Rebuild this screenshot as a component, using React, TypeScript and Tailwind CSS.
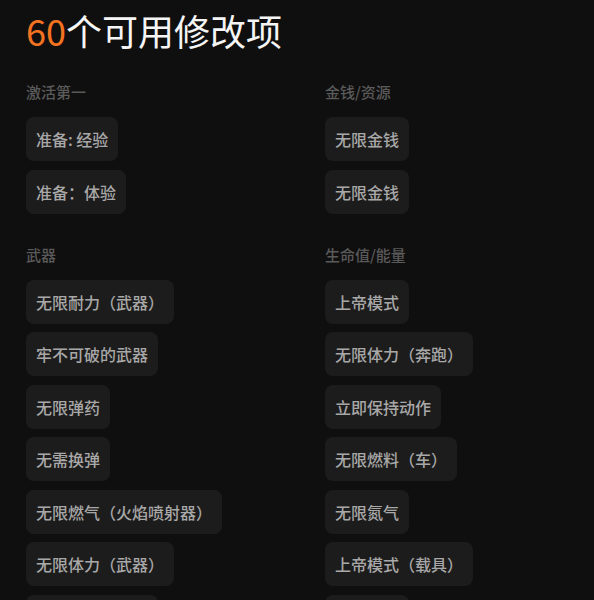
import React from "react";

const sections: { title: string; items: string[] }[][] = [
  [
    { title: "激活第一", items: ["准备: 经验", "准备：体验"] },
    {
      title: "武器",
      items: [
        "无限耐力（武器）",
        "牢不可破的武器",
        "无限弹药",
        "无需换弹",
        "无限燃气（火焰喷射器）",
        "无限体力（武器）",
        "无限手雷与炸药",
      ],
    },
  ],
  [
    { title: "金钱/资源", items: ["无限金钱", "无限金钱"] },
    {
      title: "生命值/能量",
      items: [
        "上帝模式",
        "无限体力（奔跑）",
        "立即保持动作",
        "无限燃料（车）",
        "无限氮气",
        "上帝模式（载具）",
        "无限护甲",
      ],
    },
  ],
];

function Section({ title, items }: { title: string; items: string[] }) {
  return (
    <div className="flex flex-col">
      <div className="h-6 leading-[22px] text-[15px] font-medium text-[#5a5a5a]">{title}</div>
      <div className="mt-3 flex flex-col items-start gap-[8.5px]">
        {items.map((it, i) => (
          <div
            key={i}
            className="h-[44px] flex items-center px-[10px] rounded-lg bg-[#1d1c1c] text-[16px] font-medium text-[#a8a8a8] whitespace-nowrap"
          >
            {it}
          </div>
        ))}
      </div>
    </div>
  );
}

export default function App() {
  return (
    <div
      className="w-[594px] h-[600px] overflow-hidden bg-[#100f0f] pl-[26px]"
      style={{ fontFamily: '"Noto Sans CJK SC", "Noto Sans", sans-serif' }}
    >
      <h1 className="pt-[8px] text-[36px] leading-[44px] text-[#f5f5f5]">
        <span className="text-[#f47321]">60</span>个可用修改项
      </h1>
      <div className="mt-[29px] grid grid-cols-[275px_275px] gap-x-6">
        {sections.map((col, ci) => (
          <div key={ci} className="flex flex-col gap-[30px]">
            {col.map((s, si) => (
              <Section key={si} title={s.title} items={s.items} />
            ))}
          </div>
        ))}
      </div>
    </div>
  );
}
